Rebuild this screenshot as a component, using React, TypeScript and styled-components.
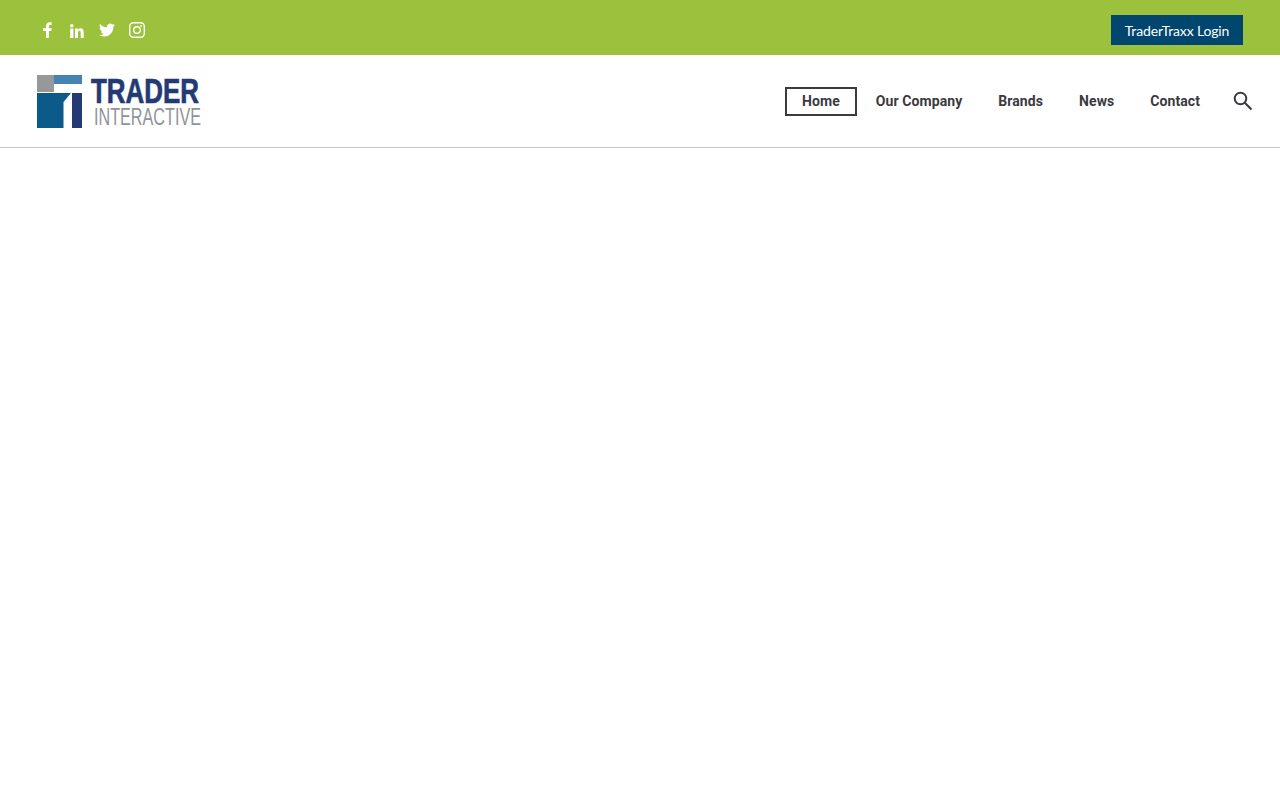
import React from "react";
import styled, { createGlobalStyle } from "styled-components";

const Global = createGlobalStyle`
  html, body { margin: 0; padding: 0; background: #fff; }
  body { font-family: "Roboto", "Liberation Sans", sans-serif; }
  a { text-decoration: none; }
`;

const Page = styled.div`
  min-height: 800px;
  background: #fff;
`;

const TopBar = styled.div`
  height: 55px;
  box-sizing: border-box;
  background: #9cc13c;
  display: flex;
  align-items: center;
  justify-content: space-between;
  padding: 5px 37px 0 32px;
`;

const Socials = styled.div`
  display: flex;
  align-items: center;
`;

const SocialLink = styled.a`
  width: 30px;
  height: 30px;
  display: flex;
  align-items: center;
  justify-content: center;
  color: #fff;
`;

const LoginButton = styled.a`
  height: 30px;
  width: 132px;
  display: flex;
  align-items: center;
  justify-content: center;
  background: #00466f;
  color: #fff;
  font-family: "Lato", "Noto Sans", sans-serif;
  font-size: 14px;
  letter-spacing: -0.15px;
`;

const Header = styled.header`
  height: 93px;
  box-sizing: border-box;
  border-bottom: 1px solid #c4c4c4;
  display: flex;
  align-items: center;
  justify-content: space-between;
  padding: 0 27px 0 37px;
`;

const LogoLink = styled.a`
  display: flex;
  margin-top: 1px;
`;

const LogoSvg = styled.svg`
  overflow: visible;
`;

const Nav = styled.nav`
  display: flex;
  align-items: center;
  gap: 2px;
`;

const NavItem = styled.a<{ $active?: boolean }>`
  height: 29px;
  box-sizing: border-box;
  display: flex;
  align-items: center;
  padding: 0 15px;
  border: 2px solid ${(p) => (p.$active ? "#3a3a46" : "transparent")};
  color: #3a3a40;
  font-size: 14px;
  font-weight: 700;
  letter-spacing: 0.08px;
  white-space: nowrap;
`;

const SearchButton = styled.a`
  width: 20px;
  height: 20px;
  margin-left: 14px;
  display: flex;
  color: #3a3a40;
`;

const LogoText = styled.text<{ $kind: "main" | "sub" }>`
  font-family: "Liberation Sans", sans-serif;
  font-weight: ${(p) => (p.$kind === "main" ? 700 : 400)};
  fill: ${(p) => (p.$kind === "main" ? "#233a74" : "#909498")};
  stroke: ${(p) => (p.$kind === "main" ? "#233a74" : "none")};
  stroke-width: ${(p) => (p.$kind === "main" ? 0.7 : 0)}px;
`;

const Logo = () => (
  <LogoSvg width="164" height="53" viewBox="0 0 164 53" aria-label="Trader Interactive">
    <rect x="0" y="0" width="17" height="17" fill="#97989b" />
    <rect x="17" y="0" width="28" height="9" fill="#4583b4" />
    <path d="M0 18H34L26.500 27V53H0Z" fill="#0b5a8a" />
    <rect x="35" y="18" width="10" height="35" fill="#233a74" />
    <LogoText $kind="main" x="54" y="28" fontSize="35" textLength="108" lengthAdjust="spacingAndGlyphs">TRADER</LogoText>
    <LogoText $kind="sub" x="57" y="50" fontSize="24" textLength="107" lengthAdjust="spacingAndGlyphs">INTERACTIVE</LogoText>
  </LogoSvg>
);

export default function App() {
  return (
    <Page>
      <Global />
      <TopBar>
        <Socials>
          <SocialLink href="#">
            <svg width="16" height="16" viewBox="0 0 16 16" fill="currentColor">
              <path d="M7 16V9H4V6.200H7V4.200C7 1.800 8.600 .3 10.800 .3c1 0 1.700 .1 1.900 .1V3h-1.300c-1.200 0-1.500 .6-1.500 1.400v1.800h2.800L12.300 9H9.900v7Z" />
            </svg>
          </SocialLink>
          <SocialLink href="#">
            <svg width="16" height="16" viewBox="0 0 16 16" fill="currentColor">
              <circle cx="2.800" cy="3.800" r="1.800" />
              <rect x="1.200" y="6.500" width="3.200" height="9.500" />
              <path d="M6 6.500h2.900v1.300c.5-.9 1.500-1.500 2.700-1.500 2.500 0 3.100 1.700 3.100 4V16h-3v-5c0-1.100-.2-2.200-1.400-2.200S9 9.800 9 11v5H6Z" />
            </svg>
          </SocialLink>
          <SocialLink href="#">
            <svg width="16" height="16" viewBox="0 0 24 24" fill="currentColor">
              <path d="M23.950 4.570a10 10 0 0 1-2.820.77 4.960 4.960 0 0 0 2.160-2.720c-.95.550-2 .96-3.130 1.190a4.920 4.920 0 0 0-8.380 4.480C7.690 8.100 4.070 6.130 1.640 3.160a4.820 4.820 0 0 0-.66 2.470c0 1.710.87 3.210 2.190 4.100a4.900 4.900 0 0 1-2.230-.62v.06a4.920 4.920 0 0 0 3.950 4.830 5 5 0 0 1-2.210.08 4.940 4.940 0 0 0 4.600 3.420A9.870 9.870 0 0 1 0 19.540a14 14 0 0 0 7.560 2.210c9.050 0 14-7.500 14-13.980 0-.21 0-.42-.02-.63a9.940 9.940 0 0 0 2.410-2.570Z" />
            </svg>
          </SocialLink>
          <SocialLink href="#">
            <svg width="16" height="16" viewBox="0 0 16 16" fill="none" stroke="currentColor" strokeWidth="1.400">
              <rect x=".7" y=".7" width="14.600" height="14.600" rx="3.800" />
              <circle cx="8" cy="8" r="3.300" />
              <circle cx="12.100" cy="3.900" r=".9" fill="currentColor" stroke="none" />
            </svg>
          </SocialLink>
        </Socials>
        <LoginButton href="#">TraderTraxx Login</LoginButton>
      </TopBar>
      <Header>
        <LogoLink href="#"><Logo /></LogoLink>
        <Nav>
          <NavItem href="#" $active>Home</NavItem>
          <NavItem href="#">Our Company</NavItem>
          <NavItem href="#">Brands</NavItem>
          <NavItem href="#">News</NavItem>
          <NavItem href="#">Contact</NavItem>
          <SearchButton href="#">
            <svg width="20" height="20" viewBox="0 0 20 20" fill="none" stroke="currentColor" strokeWidth="2">
              <circle cx="7.500" cy="7.500" r="5.800" />
              <path d="M11.800 11.800L18.500 18.500" />
            </svg>
          </SearchButton>
        </Nav>
      </Header>
    </Page>
  );
}
